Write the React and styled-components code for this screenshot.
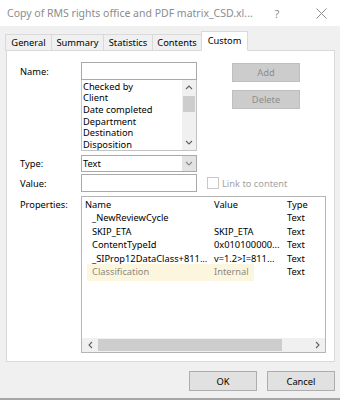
import React from 'react';
import styled, { createGlobalStyle } from 'styled-components';

const Global = createGlobalStyle`
  html, body { margin: 0; padding: 0; }
  body {
    width: 340px; height: 400px; overflow: hidden;
    background: #f0f0f0;
    font-family: "Noto Sans", "Segoe UI", sans-serif;
    font-size: 9.3px;
    color: #000;
  }
  * { box-sizing: border-box; }
`;

const Window = styled.div`
  width: 340px; height: 400px;
  display: flex; flex-direction: column;
  background: #f0f0f0;
  border-bottom: 2px solid #a6a6a6;
`;

const TitleBar = styled.div`
  height: 26px; flex: none;
  background: #fff;
  display: flex; align-items: center;
  padding-left: 7px;
  color: #8c8c8c;
`;

const Title = styled.div`
  flex: 1;
  font-size: 10.5px;
  white-space: nowrap;
  overflow: hidden;
`;

const TitleGlyph = styled.div`
  width: ${p => p.$w}px;
  flex: none;
  display: flex; justify-content: center; align-items: center;
  font-size: 11px;
  color: #8c8c8c;
`;

const Body = styled.div`
  flex: 1;
  display: flex; flex-direction: column;
  padding: 6px 5px 0 6px;
`;

const TabStrip = styled.div`
  display: flex; align-items: flex-end;
  height: 19px;
  margin-bottom: -1px;
  position: relative;
  z-index: 1;
`;

const Tab = styled.div`
  width: ${p => p.$w}px;
  height: ${p => (p.$active ? 20 : 17)}px;
  display: flex; align-items: center; justify-content: center;
  padding-bottom: ${p => (p.$active ? 2 : 0)}px;
  background: ${p => (p.$active ? '#fff' : '#f0f0f0')};
  border: 1px solid #d9d9d9;
  border-bottom: ${p => (p.$active ? '1px solid #fff' : '1px solid #d9d9d9')};
  margin-left: -1px;
  white-space: nowrap;
`;

const Panel = styled.div`
  height: 312px;
  background: #fff;
  border: 1px solid #d9d9d9;
  padding: 11px 8px 0 13px;
  display: flex; flex-direction: column;
`;

const FieldRow = styled.div`
  display: grid;
  grid-template-columns: 61px 116px 1fr;
  margin-top: ${p => p.$top || 0}px;
  align-items: start;
`;

const Label = styled.div`
  height: ${p => p.$h || 18}px;
  display: flex; align-items: center;
  padding-top: ${p => p.$pt || 0}px;
  white-space: nowrap;
`;

const Stack = styled.div`
  display: flex; flex-direction: column;
`;

const TextBox = styled.div`
  height: ${p => p.$h || 18}px;
  border: 1px solid #a9a9a9;
  background: #fff;
`;

const ListBox = styled.div`
  height: 71px;
  border: 1px solid #c3c3c3;
  border-top: none;
  display: flex;
`;

const ListItems = styled.div`
  flex: 1;
  padding-left: 1px;
  padding-top: 0.5px;
`;

const ListItem = styled.div`
  height: 11.7px;
  line-height: 11.7px;
  white-space: nowrap;
`;

const VScroll = styled.div`
  width: 14px;
  background: #f0f0f0;
  display: flex; flex-direction: column;
`;

const ScrollBtn = styled.div`
  width: ${p => p.$w || 14}px;
  height: ${p => p.$h || 14}px;
  flex: none;
  display: flex; align-items: center; justify-content: center;
`;

const VThumb = styled.div`
  height: 16px;
  background: #cdcdcd;
  margin: 1px 1px 0 1px;
`;

const Spacer = styled.div`flex: 1;`;

const ButtonStack = styled.div`
  display: flex; flex-direction: column; gap: 8px;
  padding-left: 35px;
  padding-top: 1px;
`;

const DisabledButton = styled.div`
  width: 68px; height: 19px;
  background: #cccccc;
  border: 1px solid #bfbfbf;
  color: #8d8d8d;
  display: flex; align-items: center; justify-content: center;
`;

const Combo = styled.div`
  height: 17px;
  border: 1px solid #a9a9a9;
  background: #fff;
  display: flex; align-items: stretch;
`;

const ComboText = styled.div`
  flex: 1;
  display: flex; align-items: center;
  padding-left: 1px;
`;

const ComboButton = styled.div`
  width: 14px;
  background: #e3e3e3;
  display: flex; align-items: center; justify-content: center;
`;

const CheckRow = styled.div`
  height: 18px;
  display: flex; align-items: center; gap: 3px;
  padding-left: 10px;
  color: #a3a3a3;
  white-space: nowrap;
`;

const CheckBox = styled.div`
  width: 12px; height: 12px;
  border: 1px solid #c8c8c8;
  background: #fff;
`;

const ListView = styled.div`
  grid-column: 2 / 4;
  width: 245px;
  height: 157px;
  border: 1px solid #b5b5b5;
  background: #fff;
  display: flex; flex-direction: column;
`;

const LVRows = styled.div`
  flex: 1;
`;

const LVRow = styled.div`
  position: relative;
  display: grid;
  grid-template-columns: 129px 73px 1fr;
  height: ${p => (p.$header ? 14 : 13.5)}px;
  align-items: center;
  white-space: nowrap;
  color: ${p => (p.$dim ? '#8c8a7e' : '#000')};
  &::before {
    content: '';
    display: ${p => (p.$highlight ? 'block' : 'none')};
    position: absolute;
    left: 5px; width: 167px; top: -1px; bottom: -2px;
    background: #fcf6de;
  }
`;

const LVCell = styled.div`
  position: relative;
  padding-left: ${p => p.$indent || 3}px;
  overflow: hidden;
  color: ${p => p.$color || 'inherit'};
`;

const HScroll = styled.div`
  height: 14px;
  background: #f0f0f0;
  display: flex;
`;

const HThumb = styled.div`
  width: 184px;
  background: #cdcdcd;
  margin: 1px 0;
`;

const ButtonRow = styled.div`
  display: flex; justify-content: flex-end; gap: 10px;
  margin-top: 9px;
`;

const DialogButton = styled.div`
  width: 68px; height: 20px;
  background: #e1e1e1;
  border: 1px solid #adadad;
  display: flex; align-items: center; justify-content: center;
`;

const Chevron = ({ dir, color = '#606060' }) => {
  const paths = {
    up: 'M1 5 L4 2 L7 5',
    down: 'M1 2 L4 5 L7 2',
    left: 'M5 1 L2 4 L5 7',
    right: 'M2 1 L5 4 L2 7',
  };
  const horiz = dir === 'left' || dir === 'right';
  return (
    <svg width={horiz ? 7 : 8} height={horiz ? 8 : 7} viewBox={horiz ? '0 0 7 8' : '0 0 8 7'}>
      <path d={paths[dir]} fill="none" stroke={color} strokeWidth="1.1" />
    </svg>
  );
};

const tabs = [
  { label: 'General', w: 47 },
  { label: 'Summary', w: 53 },
  { label: 'Statistics', w: 50 },
  { label: 'Contents', w: 50 },
  { label: 'Custom', w: 47, active: true },
];

const listItems = ['Checked by', 'Client', 'Date completed', 'Department', 'Destination', 'Disposition'];

const props = [
  { name: '_NewReviewCycle', value: '', type: 'Text' },
  { name: 'SKIP_ETA', value: 'SKIP_ETA', type: 'Text' },
  { name: 'ContentTypeId', value: '0x010100000...', type: 'Text' },
  { name: '_SIProp12DataClass+811...', value: 'v=1.2>I=811...', type: 'Text' },
  { name: 'Classification', value: 'Internal', type: 'Text', highlight: true },
];

export default function App() {
  return (
    <>
      <Global />
      <Window>
        <TitleBar>
          <Title>Copy of RMS rights office and PDF matrix_CSD.xl...</Title>
          <TitleGlyph $w={20}>?</TitleGlyph>
          <TitleGlyph $w={15} />
          <TitleGlyph $w={38}>
            <svg width="11" height="11" viewBox="0 0 11 11">
              <path d="M0.5 0.5 L10.5 10.5 M10.5 0.5 L0.5 10.5" stroke="#8c8c8c" strokeWidth="1" fill="none" />
            </svg>
          </TitleGlyph>
        </TitleBar>
        <Body>
          <TabStrip>
            {tabs.map(t => (
              <Tab key={t.label} $w={t.w} $active={t.active}>{t.label}</Tab>
            ))}
          </TabStrip>
          <Panel>
            <FieldRow>
              <Label $pt={1}>Name:</Label>
              <Stack>
                <TextBox />
                <ListBox>
                  <ListItems>
                    {listItems.map(i => <ListItem key={i}>{i}</ListItem>)}
                  </ListItems>
                  <VScroll>
                    <ScrollBtn $h={15}><Chevron dir="up" /></ScrollBtn>
                    <VThumb />
                    <Spacer />
                    <ScrollBtn $h={15}><Chevron dir="down" /></ScrollBtn>
                  </VScroll>
                </ListBox>
              </Stack>
              <ButtonStack>
                <DisabledButton>Add</DisabledButton>
                <DisabledButton>Delete</DisabledButton>
              </ButtonStack>
            </FieldRow>
            <FieldRow $top={4}>
              <Label $h={17}>Type:</Label>
              <Combo>
                <ComboText>Text</ComboText>
                <ComboButton><Chevron dir="down" color="#8a8a8a" /></ComboButton>
              </Combo>
            </FieldRow>
            <FieldRow $top={2}>
              <Label>Value:</Label>
              <TextBox />
              <CheckRow>
                <CheckBox />
                Link to content
              </CheckRow>
            </FieldRow>
            <FieldRow $top={4}>
              <Label $h={14} $pt={2}>Properties:</Label>
              <ListView>
                <LVRows>
                  <LVRow $header>
                    <LVCell>Name</LVCell>
                    <LVCell>Value</LVCell>
                    <LVCell>Type</LVCell>
                  </LVRow>
                  {props.map(p => (
                    <LVRow key={p.name} $highlight={p.highlight} $dim={p.highlight}>
                      <LVCell $indent={10}>{p.name}</LVCell>
                      <LVCell>{p.value}</LVCell>
                      <LVCell $color="#000">{p.type}</LVCell>
                    </LVRow>
                  ))}
                </LVRows>
                <HScroll>
                  <ScrollBtn $w={16}><Chevron dir="left" /></ScrollBtn>
                  <HThumb />
                  <Spacer />
                  <ScrollBtn $w={16}><Chevron dir="right" /></ScrollBtn>
                </HScroll>
              </ListView>
            </FieldRow>
          </Panel>
          <ButtonRow>
            <DialogButton>OK</DialogButton>
            <DialogButton>Cancel</DialogButton>
          </ButtonRow>
        </Body>
      </Window>
    </>
  );
}
